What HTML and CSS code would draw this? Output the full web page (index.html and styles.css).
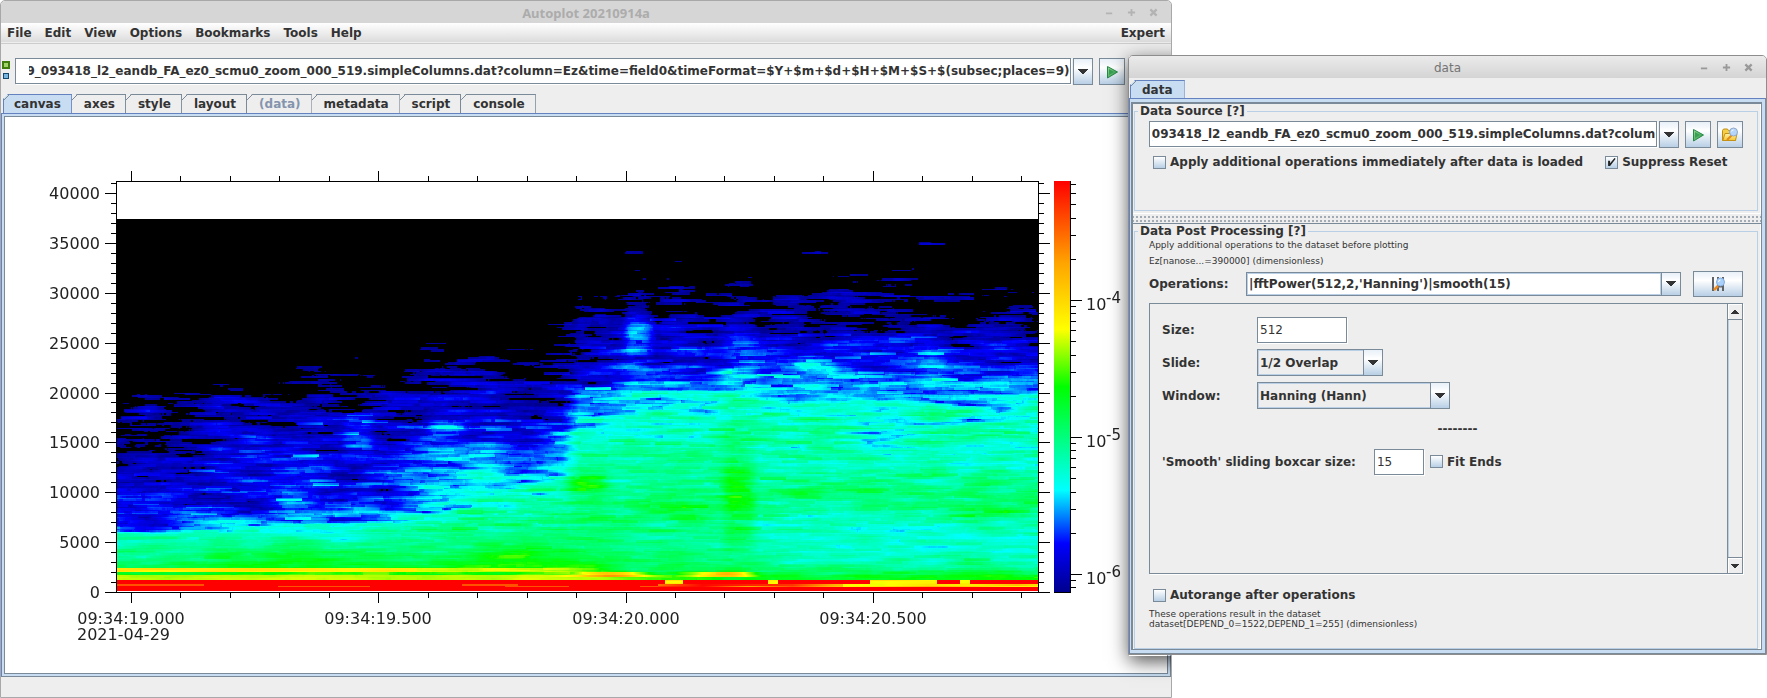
FILE: index.html
```html
<!DOCTYPE html>
<html lang="en">
<head>
<meta charset="utf-8">
<title>Autoplot 20210914a</title>
<link rel="stylesheet" href="styles.css">
</head>
<body>
<svg class="defs" aria-hidden="true">
  <defs>
    <linearGradient id="playFill" x1="0" y1="0" x2="1" y2="1"><stop offset="0" stop-color="#9bdc9e"/><stop offset="1" stop-color="#1f8f3a"/></linearGradient>
    <linearGradient id="folderFill" x1="0" y1="0" x2="0" y2="1"><stop offset="0" stop-color="#fff3a8"/><stop offset="1" stop-color="#f4c52f"/></linearGradient>
    <symbol id="down" viewBox="0 0 10 6"><path d="M0 0h10v1H9v1H8v1H7v1H6v1H4V4H3V3H2V2H1V1H0z" fill="#333"/></symbol>
    <symbol id="up" viewBox="0 0 8 4"><path d="M0 4V3h1V2h1V1h1V0h2v1h1v1h1v1h1v1z" fill="#333"/></symbol>
    <symbol id="play" viewBox="0 0 16 16"><path d="M3.500 2.500v11.500L13.500 8z" fill="url(#playFill)" stroke="#268a45" stroke-linejoin="round"/><path d="M5 5v6l5-3z" fill="#37a052"/></symbol>
    <symbol id="folder" viewBox="0 0 16 16">
      <path d="M.500 13.500v-10l1-1.500h4l1 1.500h7v10z" fill="#f6cf49" stroke="#bd8c12"/>
      <path d="M.800 13.500 3 6.500h12l-1.500 7z" fill="url(#folderFill)" stroke="#c29216"/>
      <path d="m5 13 4.500-4.500" stroke="#e28a1c" stroke-width="2"/>
      <circle cx="11.500" cy="5" r="4" fill="#b5d5fa" stroke="#91a7c6"/>
      <path d="M9.500 4.500a2 2 0 0 1 2-1.500" fill="none" stroke="#fff"/>
    </symbol>
    <symbol id="filters" viewBox="0 0 16 16">
      <path d="M3 1v14M8 1v14M13 1v14M8 10.500h5" stroke="#5f6266" stroke-width="2"/>
      <path d="m4 14 4-4" stroke="#ee8a1e" stroke-width="2.500"/>
      <circle cx="10.500" cy="6" r="4" fill="#a9d0fb" stroke="#84aee0"/>
      <path d="M8.500 6a2 2 0 0 1 2-2" fill="none" stroke="#fff"/>
    </symbol>
    <symbol id="winmin" viewBox="0 0 10 10"><path d="M1 6h7" stroke="currentColor" stroke-width="2"/></symbol>
    <symbol id="winmax" viewBox="0 0 10 10"><path d="M1 5h8M5 1v8" stroke="currentColor" stroke-width="2"/></symbol>
    <symbol id="winclose" viewBox="0 0 10 10"><path d="m1.500 1.500 7 7m0-7-7 7" stroke="currentColor" stroke-width="2.500"/></symbol>
  </defs>
</svg>

<main class="window main-window">
  <header class="titlebar inactive">
    <h1 class="title">Autoplot 20210914a</h1>
    <div class="window-buttons">
      <button aria-label="Minimize"><svg><use href="#winmin"/></svg></button>
      <button aria-label="Maximize"><svg><use href="#winmax"/></svg></button>
      <button aria-label="Close"><svg><use href="#winclose"/></svg></button>
    </div>
  </header>
  <nav class="menubar">
    <button>File</button><button>Edit</button><button>View</button><button>Options</button><button>Bookmarks</button><button>Tools</button><button>Help</button>
    <button class="expert">Expert</button>
  </nav>
  <div class="address-row">
    <div class="status"><i class="led green"></i><i class="led blue"></i></div>
    <input class="field scrolled address" aria-label="Data address" value="20210429_093418_l2_eandb_FA_ez0_scmu0_zoom_000_519.simpleColumns.dat?column=Ez&amp;time=field0&amp;timeFormat=$Y+$m+$d+$H+$M+$S+$(subsec;places=9)">
    <button class="metal drop" aria-label="Recent"><svg><use href="#down"/></svg></button>
    <button class="metal square" aria-label="Plot"><svg><use href="#play"/></svg></button>
  </div>
  <div class="tabs" role="tablist">
    <button class="tab selected" role="tab" aria-selected="true">canvas</button><button class="tab" role="tab">axes</button><button class="tab" role="tab">style</button><button class="tab" role="tab">layout</button><button class="tab detached" role="tab">(data)</button><button class="tab" role="tab">metadata</button><button class="tab" role="tab">script</button><button class="tab" role="tab">console</button>
  </div>
  <section class="tab-panel">
    <div class="plot-area">
      <svg id="chart" class="chart" viewBox="5 117 1162 555" width="1162" height="555">
        <defs>
          <linearGradient id="wedge" x1="0" y1="0" x2="0" y2="1">
            <stop offset="0" stop-color="#f00"/><stop offset=".2" stop-color="#ffa500"/><stop offset=".36" stop-color="#ff0"/><stop offset=".5" stop-color="#0f0"/><stop offset=".75" stop-color="#0ff"/><stop offset=".88" stop-color="#00f"/><stop offset="1" stop-color="#00008b"/>
          </linearGradient>
        </defs>
        <foreignObject x="117" y="182" width="921" height="410"><canvas id="spectrogram" class="spectrogram" width="921" height="410"></canvas></foreignObject>
        <rect x="1054" y="181" width="16" height="412" fill="url(#wedge)"/>
        <path d="M1054 592.500h17M1070.500 181v412" class="axis"/>
        <rect x="116.500" y="181.500" width="922" height="411" class="axis"/>
      </svg>
    </div>
  </section>
  <footer class="statusbar"></footer>
  <div class="dialog-shade"></div>
</main>

<section class="window dialog">
  <header class="titlebar">
    <h2 class="title">data</h2>
    <div class="window-buttons">
      <button aria-label="Minimize"><svg><use href="#winmin"/></svg></button>
      <button aria-label="Maximize"><svg><use href="#winmax"/></svg></button>
      <button aria-label="Close"><svg><use href="#winclose"/></svg></button>
    </div>
  </header>
  <div class="tabs dialog-tabs" role="tablist"><button class="tab selected" role="tab" aria-selected="true">data</button></div>
  <div class="tab-panel">
    <div class="split">
      <fieldset class="group source">
        <legend>Data Source [?]</legend>
        <div class="source-row">
          <input class="field scrolled" aria-label="Data source" value="20210429_093418_l2_eandb_FA_ez0_scmu0_zoom_000_519.simpleColumns.dat?colum">
          <button class="metal drop" aria-label="Recent sources"><svg><use href="#down"/></svg></button>
          <button class="metal square" aria-label="Load"><svg><use href="#play"/></svg></button>
          <button class="metal square" aria-label="Inspect"><svg><use href="#folder"/></svg></button>
        </div>
        <div class="checks">
          <label class="check"><input type="checkbox">Apply additional operations immediately after data is loaded</label>
          <label class="check"><input type="checkbox" checked>Suppress Reset</label>
        </div>
      </fieldset>
      <div class="divider"></div>
      <fieldset class="group processing">
        <legend>Data Post Processing [?]</legend>
        <p class="note">Apply additional operations to the dataset before plotting</p>
        <p class="note">Ez[nanose...=390000] (dimensionless)</p>
        <div class="operations">
          <label for="ops">Operations:</label>
          <input id="ops" class="field ops-field" value="|fftPower(512,2,'Hanning')|smooth(15)">
          <button class="metal drop" aria-label="Recent operations"><svg><use href="#down"/></svg></button>
          <button class="metal filter" aria-label="Edit operations"><svg><use href="#filters"/></svg></button>
        </div>
        <div class="scroller">
          <div class="params">
            <div class="param"><label for="size">Size:</label><input id="size" class="field plain size" value="512"></div>
            <div class="param"><label for="slide">Slide:</label>
              <span class="combo slide"><select id="slide"><option>1/2 Overlap</option></select><span class="metal drop"><svg><use href="#down"/></svg></span></span></div>
            <div class="param"><label for="window">Window:</label>
              <span class="combo hann"><select id="window"><option>Hanning (Hann)</option></select><span class="metal drop"><svg><use href="#down"/></svg></span></span></div>
            <div class="rule">--------</div>
            <div class="smooth"><label for="boxcar">'Smooth' sliding boxcar size:</label><input id="boxcar" class="field plain boxcar" value="15"><label class="check"><input type="checkbox">Fit Ends</label></div>
          </div>
          <div class="scrollbar"><button aria-label="Scroll up"><svg><use href="#up"/></svg></button><button class="end" aria-label="Scroll down"><svg class="flip"><use href="#up"/></svg></button></div>
        </div>
        <label class="check autorange"><input type="checkbox">Autorange after operations</label>
        <p class="note result">These operations result in the dataset<br>dataset[DEPEND_0=1522,DEPEND_1=255] (dimensionless)</p>
      </fieldset>
    </div>
  </div>
</section>
<script src="plot.js"></script>
</body>
</html>
```
FILE: styles.css
```css
* { box-sizing: border-box; }
html, body { height: 100%; }
body {
  margin: 0;
  background: #fff;
  color: #333;
  font: bold 12px/14px "DejaVu Sans", Verdana, sans-serif;
  overflow: hidden;
  position: relative;
}
button, input, select { font: inherit; color: inherit; margin: 0; padding: 0; border: 0; border-radius: 0; background: none; }
h1, h2, p { margin: 0; font: inherit; }
.defs { position: absolute; width: 0; height: 0; }

.window { position: absolute; display: flex; flex-direction: column; background: #eee; border: 1px solid #a8a8a8; border-radius: 5px 5px 0 0; }
.main-window { left: 0; top: 0; width: calc(100% - 595px); height: 100%; overflow: hidden; }
.dialog { left: calc(100% - 639px); right: 0; top: 55px; border-color: #8d8d8d; }
.dialog-shade { position: absolute; left: 1128px; top: 55px; width: 639px; height: 600px; box-shadow: 0 5px 18px rgba(0, 0, 0, .7); }

.titlebar { flex: none; height: 22px; display: grid; grid-template-columns: 1fr auto 1fr; align-items: center; background: linear-gradient(#ebebeb, #d4d4d4); color: #747474; border-radius: 4px 4px 0 0; }
.titlebar.inactive { background: #d6d6d6; color: #acacac; }
.title { grid-column: 2; font-weight: normal; padding-top: 2px; }
.inactive .title { font: bold 13px/14px "Noto Sans", sans-serif; }
.window-buttons { display: flex; gap: 12px; justify-content: flex-end; padding-right: 12px; }
.window-buttons button { width: 10px; height: 10px; color: #999; }
.inactive .window-buttons button { color: #b3b3b3; }
.window-buttons svg { display: block; width: 9px; height: 9px; }

.menubar { flex: none; height: 21px; display: flex; align-items: center; gap: 13px; padding: 0 6px; background: linear-gradient(#fff, #dadada); border-bottom: 1px solid #ccc; box-shadow: inset 0 -1px #eee; }
.expert { margin-left: auto; }

.address-row { flex: none; height: 50px; padding: 14px 46px 0 1px; display: flex; align-items: flex-start; }
.status { width: 13px; padding-top: 3px; display: flex; flex-direction: column; gap: 4px; }
.led { width: 8px; height: 8px; }
.green { background: #a0d468; border: 2px solid #3f7d0c; }
.blue { width: 6px; height: 6px; margin-left: 1px; background: #75b5e0; border: 1px solid #12486e; }
.field { flex: 1; min-width: 0; height: 26px; padding: 0 1px 0 2px; border: 1px solid #7a8a99; background: #fff; box-shadow: 1px 1px #fff; }
.field:focus { outline: none; }
.field.address { padding-left: 13px; }
.plain { font-weight: normal; flex: none; }
.metal { flex: none; display: flex; align-items: center; justify-content: center; border: 1px solid #7a8a99; background: linear-gradient(#e8f0f8, #fff 35%, #b8cfe5); }
.drop { width: 20px; height: 27px; margin-left: 2px; }
.drop svg { width: 10px; height: 6px; }
.square { width: 26px; height: 27px; margin-left: 6px; }
.square svg, .filter svg { width: 16px; height: 16px; }

.tabs { flex: none; height: 19px; padding-left: 2px; display: flex; }
.tab { position: relative; padding: 0 10px 0 12px; background: #eee; border: 1px solid #7a8a99; border-left: 0; border-bottom: 0; clip-path: polygon(5px 0, 100% 0, 100% 100%, 0 100%, 0 5px); }
.tab::before { content: ""; position: absolute; left: 0; top: -1px; width: 6px; height: 6px; background: linear-gradient(135deg, transparent 42%, #7a8a99 42%, #7a8a99 56%, transparent 56%); }
.tab.selected { padding: 0 10px; background: #c8ddf2; border-color: #6382bf; border-left: 1px solid #6382bf; }
.tab.detached { color: #8494ad; }

.tab-panel { flex: 1; display: flex; padding: 3px 3px 3px 1px; background: #c8ddf2; border: 1px solid #6382bf; border-color: #6382bf #7a8a99 #7a8a99 #6382bf; }
.main-window .tab-panel { padding: 2px; }
.plot-area { flex: 1; min-width: 0; background: #fff; border: 1px solid #7a8a99; overflow: hidden; }
.statusbar { flex: none; height: 20px; }
.chart { display: block; }
.spectrogram { display: block; }
.axis { fill: none; stroke: #000; stroke-width: 1; }
.chart text { font: 16px "DejaVu Sans", sans-serif; fill: #222; }
.chart .power { font-size: 15px; }

.dialog-tabs { height: 20px; padding: 2px 0 0 1px; }
.dialog-tabs .tab.selected { padding: 0 11px; }
.split { flex: 1; min-width: 0; border: 1px solid #7a8a99; border-width: 2px 1px 1px 2px; background: #eee; box-shadow: inset -1px -1px #fff; }
.group { margin: 0 3px 0 1px; padding: 0 14px; border: 1px solid #b8cfe5; min-width: 0; }
.group legend { padding: 0 2px; margin-left: -11px; line-height: 14px; }
.source { height: 107px; padding-top: 3px; }
.source-row { display: flex; }
.checks { display: flex; gap: 22px; padding: 7px 0 0 4px; }
.check { display: flex; align-items: center; gap: 4px; white-space: nowrap; }
.check input { appearance: none; width: 13px; height: 13px; border: 1px solid #7a8a99; background: linear-gradient(#fff, #b8cfe5); display: grid; place-items: center; }
.check input:checked::before { content: ""; width: 8px; height: 8px; background: #222; clip-path: polygon(5% 35%, 30% 35%, 30% 65%, 85% 0, 100% 10%, 30% 100%, 5% 100%); }
.divider { height: 11px; margin-top: 2px; border-top: 1px solid #fff; border-bottom: 1px solid #7a8a99; background: radial-gradient(circle at 1px 1px, #a3acb5 1px, transparent 1px) 3px 2px / 4px 4px, #eee; }
.processing { height: 425px; }
.note { font: 9px/10px "DejaVu Sans", sans-serif; margin-top: 2px; }
.note + .note { margin-top: 6px; }
.operations { display: flex; align-items: center; height: 26px; margin-top: 5px; }
.operations label { width: 97px; }
.ops-field { height: 24px; border-right: 0; box-shadow: inset 0 0 0 1px #b8cfe5; }
.operations .drop { margin-left: 0; height: 24px; }
.filter { width: 50px; height: 26px; margin-left: 12px; }
.scroller { display: flex; height: 271px; margin-top: 6px; border: 1px solid #7a8a99; box-shadow: 1px 1px #fff; }
.params { flex: 1; padding: 12px; display: flex; flex-direction: column; gap: 6px; }
.param { display: flex; align-items: center; height: 27px; }
.param > label { width: 95px; }
.size { width: 90px; }
.boxcar { width: 50px; margin: 0 6px 0 18px; }
.combo { display: grid; grid-template-columns: 1fr 20px; height: 27px; }
.combo select { grid-area: 1 / 1 / 2 / 3; appearance: none; padding: 0 24px 0 2px; border: 1px solid #7a8a99; background: #eee; box-shadow: inset 0 0 0 1px #b8cfe5; }
.combo .drop { grid-area: 1 / 2; margin: 0; pointer-events: none; }
.slide { width: 126px; }
.hann { width: 193px; }
.rule { height: 27px; padding-left: 38px; line-height: 28px; text-align: center; }
.smooth { display: flex; align-items: center; height: 27px; }
.scrollbar { width: 15px; border-left: 1px solid #7a8a99; box-shadow: inset 1px 0 #b8cfe5; display: flex; flex-direction: column; justify-content: space-between; }
.scrollbar button { width: 14px; height: 16px; display: grid; place-items: center; background: #eee; border-bottom: 1px solid #7a8a99; box-shadow: inset 1px 1px #fff; }
.scrollbar .end { border-top: 1px solid #7a8a99; border-bottom: 0; }
.scrollbar svg { width: 8px; height: 4px; }
.flip { transform: rotate(180deg); }
.autorange { margin: 14px 0 0 4px; }
.result { margin-top: 7px; }
```
FILE: plot.js
```javascript
document.querySelectorAll('.scrolled').forEach(f => { f.scrollLeft = f.scrollWidth; });

const NS = 'http://www.w3.org/2000/svg';
const chart = document.getElementById('chart');

function label(x, y, text, anchor, cls) {
  const t = document.createElementNS(NS, 'text');
  t.setAttribute('x', x);
  t.setAttribute('y', y);
  t.setAttribute('text-anchor', anchor);
  if (cls) t.setAttribute('class', cls);
  t.textContent = text;
  chart.appendChild(t);
}

let ticks = '';
for (let k = 0; k <= 41; k++) {
  const y = Math.round(592 - k * 9.975) + 0.5;
  const len = k % 5 ? 5 : 11;
  ticks += `M${116 - len} ${y}h${len}M1039 ${y}h${len}`;
  if (k % 5 === 0) label(100, y + 5, String(k * 1000), 'end');
}
for (let i = 0; i <= 18; i++) {
  const x = Math.round(131 + i * 49.45) + 0.5;
  if (x > 1038) break;
  const len = i % 5 ? 5 : 10;
  ticks += `M${x} ${181 - len}v${len}M${x} 593v${len}`;
}
['09:34:19.000', '09:34:19.500', '09:34:20.000', '09:34:20.500'].forEach((s, i) =>
  label(131 + Math.round(i * 247.25), 624, s, 'middle'));
label(77, 640, '2021-04-29', 'start');
for (let d = -7; d <= -4; d++) {
  for (let m = 1; m < 10; m++) {
    const y = Math.round(300 - (d + 4 + Math.log10(m)) * 137) + 0.5;
    if (y < 182 || y > 592) continue;
    ticks += `M1071 ${y}h${m === 1 ? 11 : 5}`;
    if (m === 1) {
      label(1086, y + 9, '10', 'start');
      label(1106, y + 2, String(d), 'start', 'power');
    }
  }
}
const path = document.createElementNS(NS, 'path');
path.setAttribute('d', ticks);
path.setAttribute('class', 'axis');
chart.appendChild(path);

/* Spectrogram: smooth power surface times boxcar-averaged spectral noise. */
const W = 921, H = 410, ROWS = 255, ROW_PX = 373 / ROWS;
let seed = 20210429;
function rnd() {
  seed = (seed + 0x6D2B79F5) | 0;
  let t = Math.imul(seed ^ (seed >>> 15), 1 | seed);
  t = (t + Math.imul(t ^ (t >>> 7), 61 | t)) ^ t;
  return ((t ^ (t >>> 14)) >>> 0) / 4294967296;
}
const xs = [0, 80, 190, 270, 330, 400, 445, 462, 510, 545, 620, 700, 800, 921];
const levels = [
  [37.5, [-.6, -.6, -.6, -.6, -.5, -.4, -.30, -.20, -.11, -.13, -.13, -.14, -.15, -.15]],
  [34,   [-.6, -.6, -.6, -.6, -.5, -.4, -.28, -.18, -.11, -.13, -.12, -.13, -.14, -.12]],
  [30.5, [-.6, -.6, -.5, -.5, -.4, -.3, -.20, -.14, -.09, -.09, -.08, -.06, -.07, -.07]],
  [28.5, [-.5, -.5, -.4, -.4, -.3, -.2, -.14, -.06, -.02, -.03, -.02, -.04, -.05, -.05]],
  [26,   [-.4, -.3, -.3, -.2, -.15, -.11, -.07, .02, .05, .05, .06, .05, .03, .04]],
  [23.5, [-.25, -.15, -.12, -.10, -.03, -.01, -.02, .03, .09, .08, .10, .11, .09, .10]],
  [21.5, [-.10, -.07, -.03, -.03, .03, .03, .02, .09, .14, .14, .16, .17, .15, .19]],
  [19.5, [-.02, -.02, .03, .03, .07, .06, .05, .18, .22, .22, .24, .23, .22, .26]],
  [17,   [.01, .04, .06, .07, .11, .09, .09, .24, .29, .27, .30, .28, .28, .29]],
  [15,   [.02, .05, .08, .10, .13, .13, .15, .30, .33, .29, .33, .30, .30, .32]],
  [12.5, [.04, .08, .10, .11, .20, .22, .24, .34, .34, .31, .34, .30, .31, .33]],
  [10,   [.05, .09, .13, .13, .22, .29, .32, .37, .37, .33, .36, .35, .36, .37]],
  [8,    [.08, .11, .18, .18, .27, .34, .35, .37, .38, .35, .36, .33, .35, .37]],
  [6.5,  [.10, .19, .23, .24, .30, .35, .37, .37, .36, .33, .34, .31, .30, .32]],
  [5.7,  [.29, .28, .28, .27, .32, .37, .39, .38, .36, .33, .34, .30, .29, .30]],
  [4,    [.35, .35, .42, .38, .38, .42, .44, .41, .37, .36, .33, .31, .28, .30]],
  [2.5,  [.43, .43, .47, .45, .46, .48, .50, .48, .42, .40, .37, .35, .33, .34]],
  [1.1,  [.52, .52, .52, .52, .52, .53, .54, .53, .50, .49, .50, .46, .46, .48]],
  [0,    [.52, .52, .52, .52, .52, .53, .54, .53, .50, .49, .50, .46, .46, .48]]
];
/* Local enhancements: x, kHz, x width, kHz width, strength. */
const bursts = [
  [518, 34, 12, 9, .055], [522, 26, 14, 2.5, .10], [550, 36, 14, 2, .05], [622, 33, 16, 8, .045],
  [475, 28, 16, 1.2, .07], [740, 29.6, 110, .6, .06], [650, 31, 30, .8, .05],
  [622, 9, 16, 5, .10], [470, 10.8, 20, 1, .14], [560, 8.5, 40, 1.2, .07], [700, 9.7, 60, .7, .07], [880, 8, 40, 1.2, .06],
  [138, 14.8, 16, 1.5, .07], [240, 15.8, 16, 1.8, .09], [330, 16.5, 22, 1, .11], [330, 19, 22, 3, .04], [622, 22.5, 18, 3, .06], [700, 23, 18, 1.6, .08],
  [30, 15, 24, .8, -.07], [110, 4, 20, 1.2, .04], [390, 3.5, 30, 1, .05], [30, 6.8, 40, .4, -.05]
];
function burstSum(x, f) {
  let s = 0;
  for (const [bx, bf, wx, wf, a] of bursts) {
    const dx = (x - bx) / wx, df = (f - bf) / wf;
    if (Math.abs(dx) < 2.5 && Math.abs(df) < 2.5) s += a * Math.exp(-Math.pow(dx, 4) - df * df);
  }
  return s;
}
function interp(list, at, v) {
  let i = 0;
  while (i < at.length - 2 && v > at[i + 1]) i++;
  const t = Math.min(1, Math.max(0, (v - at[i]) / (at[i + 1] - at[i])));
  return list[i] + (list[i + 1] - list[i]) * t;
}
const stops = [[0, 0, 0, 139], [.125, 0, 0, 255], [.25, 0, 255, 255], [.5, 0, 255, 0], [.64, 255, 255, 0], [.8, 255, 165, 0], [1, 255, 0, 0]];
function colour(v) {
  if (v < 0) return [0, 0, 0];
  v = Math.min(v, 1);
  let i = 0;
  while (i < stops.length - 2 && v > stops[i + 1][0]) i++;
  const a = stops[i], b = stops[i + 1], t = (v - a[0]) / (b[0] - a[0]);
  return [1, 2, 3].map(c => a[c] + (b[c] - a[c]) * t);
}
function lattice(lx, ly) {
  const gw = Math.ceil(W / lx) + 2, gh = Math.ceil(ROWS / ly) + 2;
  const g = Float32Array.from({ length: gw * gh }, () => rnd() * 2 - 1);
  return (x, y) => {
    const fx = x / lx, fy = y / ly, ix = fx | 0, iy = fy | 0;
    const sx = fx - ix, sy = fy - iy, k = iy * gw + ix;
    return (g[k] * (1 - sx) + g[k + 1] * sx) * (1 - sy) + (g[k + gw] * (1 - sx) + g[k + gw + 1] * sx) * sy;
  };
}
const blob = lattice(34, 3), broad = lattice(70, 14), column = lattice(28, 60);
const bandNoise = lattice(45, 1);
const BOX = 26;
function noiseRow() {
  const sum = new Float64Array(W + BOX + 1);
  for (let x = 0; x < W + BOX; x++) sum[x + 1] = sum[x] + Math.pow(-Math.log(rnd() + 1e-9), 3) / 6;
  return sum;
}
const values = [];
let previous = noiseRow();
for (let r = 0; r < ROWS; r++) {
  const sum = noiseRow();
  const f = r * 37.5 / ROWS;
  const row = new Float32Array(W);
  let i = 0;
  while (i < levels.length - 2 && f < levels[i + 1][0]) i++;
  const t = Math.min(1, Math.max(0, (levels[i][0] - f) / (levels[i][0] - levels[i + 1][0])));
  for (let x = 0; x < W; x++) {
    const power = (sum[x + BOX] - sum[x] + .5 * (previous[x + BOX] - previous[x])) / BOX / 1.5;
    const noise = Math.log10(power);
    let v = interp(levels[i][1], xs, x) * (1 - t) + interp(levels[i + 1][1], xs, x) * t;
    const calm = f < 6 ? .55 : f < 14 && x > 440 ? .75 : 1;
    v += calm * (noise * .13 + blob(x, r) * .075 + broad(x, r) * .03 + column(x, r) * .03) + burstSum(x, f) + .01;
    const fade = x < 440 ? 1 : Math.max(0, 1 - (x - 440) / 160);
    const n = bandNoise(x, r);
    if (f > 1.9 && f < 2.35) v = Math.max(v, v + (.70 - v) * (x < 300 ? 1 : x < 430 ? .7 : .7 * Math.max(0, 1 - (x - 430) / 60)) * (.85 + n * .15));
    if (f > 1.1 && f < 1.5) v = v + (.64 - v) * (fade * .6 + .1);
    if (f > 1.35 && f < 1.8) v += .24 * Math.exp(-Math.pow((x - 496) / 34, 2)) + .26 * Math.exp(-Math.pow((x - 608) / 30, 2));
    if (f <= 1.1) {
      v = 1;
      const gap = (x > 547 && x < 566) || (x > 650 && x < 661) || (x > 752 && x < 820) || (x > 842 && x < 853);
      if (f > .7 && gap) v = .66 + n * .04;
      if (f > .35 && f < .66) {
        if (x > 725) v = .70 + n * .08;
        else if (x > 540) v = .86 + n * .14;
        else if (n > .3) v = .9;
      }
    }
    row[x] = v;
  }
  previous = sum;
  values.push(row);
}
const ctx = document.getElementById('spectrogram').getContext('2d');
const img = ctx.createImageData(W, H);
for (let y = 37; y < H - 1; y++) {
  const row = values[Math.min(ROWS - 1, Math.floor((H - 1 - y) / ROW_PX))];
  for (let x = 0; x < W; x++) {
    const c = colour(row[x]), p = (y * W + x) * 4;
    img.data[p] = c[0];
    img.data[p + 1] = c[1];
    img.data[p + 2] = c[2];
    img.data[p + 3] = 255;
  }
}
ctx.putImageData(img, 0, 0);
```
